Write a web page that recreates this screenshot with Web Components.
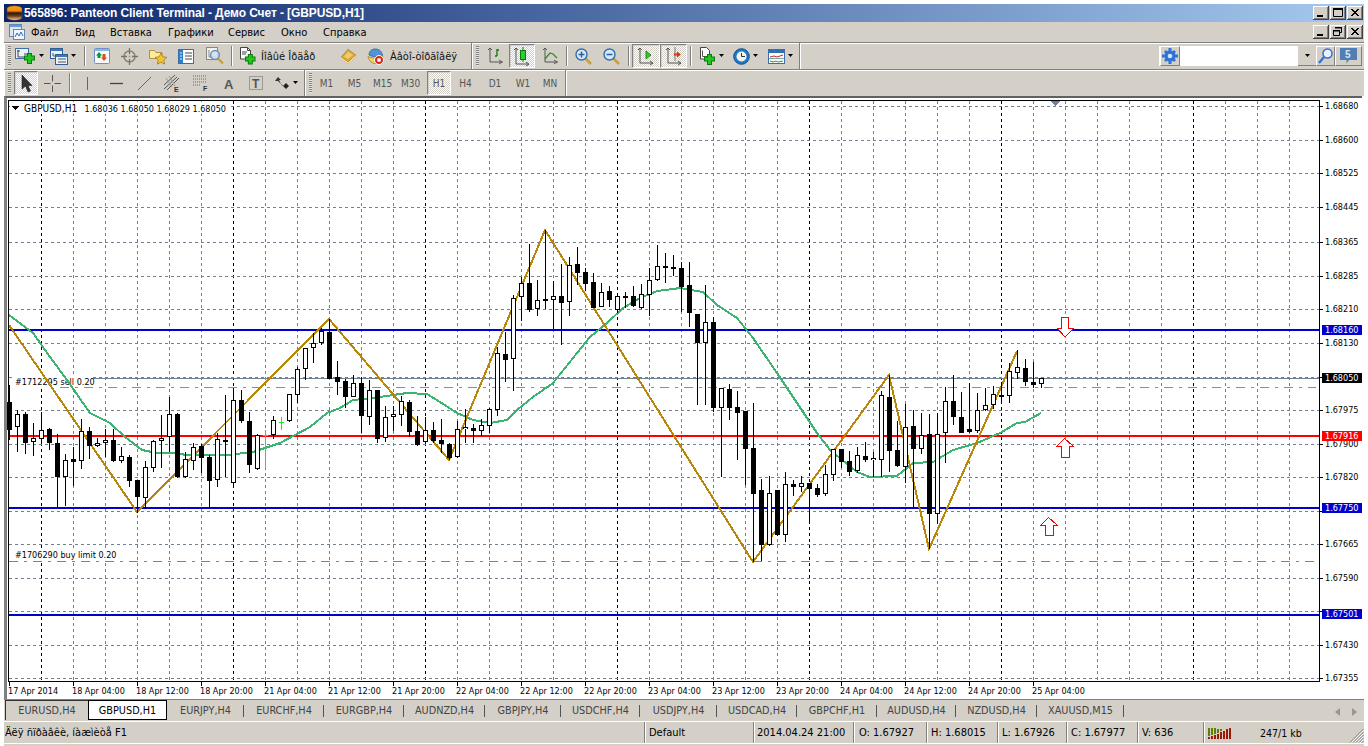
<![CDATA[<!DOCTYPE html>
<html><head><meta charset="utf-8">
<style>
html,body{margin:0;padding:0;background:#fff;width:1368px;height:746px;overflow:hidden}
</style>
<script>
const FONT='"DejaVu Sans Condensed","DejaVu Sans",sans-serif';
const ICONS={
caret:[7,4,'<path d="M1 0h5L3.500 3z" fill="#000"/>'],
newchart:[21,16,'<rect x=".5" y=".5" width="13" height="10" fill="#eaf2fb" stroke="#3f6ea6"/><path d="M3 2v7h9M2 3h3M9 6h3" stroke="#444" fill="none"/><path d="M9 10h11M14.500 5v11" stroke="#0a7a0a" stroke-width="5"/><path d="M10 10h9M14.500 6v9" stroke="#22c522" stroke-width="3"/>'],
profiles:[18,17,'<rect x=".5" y=".5" width="12" height="10" fill="#eaf2fb" stroke="#2f5f96"/><rect x="1" y="1" width="11" height="2" fill="#3f78b8"/><rect x="5.500" y="6.500" width="12" height="10" fill="#eaf2fb" stroke="#2f5f96"/><rect x="6" y="7" width="11" height="2" fill="#3f78b8"/><path d="M8 11h8M8 14h8" stroke="#555"/><path d="M3 5v3h2" stroke="#555" fill="none"/>'],
market:[16,16,'<rect x=".5" y=".5" width="15" height="15" rx="1" fill="#f6f9fe" stroke="#6b93c4"/><rect x="1" y="1" width="14" height="2" fill="#8db5e2"/><path d="M5 4l3 3.500H6.500V10h-3V7.500H2z" fill="#0a9a2a"/><path d="M10 13l-3-3.500h1.500V6h3v3.500H13z" fill="#d8501a"/>'],
navig:[17,17,'<circle cx="8.500" cy="8.500" r="5.500" fill="none" stroke="#8a8578" stroke-width="1.500"/><path d="M8.500 0v6M8.500 11v6M0 8.500h6M11 8.500h6" stroke="#77736a" stroke-width="1.300"/><circle cx="8.500" cy="8.500" r="1" fill="#a29d90"/>'],
favs:[18,18,'<path d="M.5 3.500h5l1.500 2h6v6h-12.500z" fill="#ffe9a0" stroke="#b0923c"/><path d="M12 6l1.800 3.800 4 .5-3 2.800.8 4-3.600-2-3.600 2 .8-4-3-2.800 4-.5z" fill="#f4c430" stroke="#a67c10" stroke-width=".8"/>'],
term:[16,15,'<rect x=".5" y=".5" width="15" height="14" fill="#fff" stroke="#3f6ea6"/><rect x="1" y="1" width="4" height="13" fill="#2f7fd0"/><path d="M7 4h7M7 7h7M7 10h7" stroke="#444"/><path d="M2 4h2M2 7h2M2 10h2" stroke="#cfe"/>'],
tester:[18,18,'<rect x=".5" y=".5" width="11" height="12" fill="#f2f0ea" stroke="#8a8680"/><path d="M3 3v7h7" stroke="#888" fill="none"/><circle cx="9" cy="8" r="4.300" fill="#cfe2f6" fill-opacity=".85" stroke="#5f87b0" stroke-width="1.300"/><path d="M12 11.500l5 5" stroke="#c9a13a" stroke-width="2.400"/>'],
order:[16,18,'<path d="M.5.500h7l3 3V12h-10z" fill="#fff" stroke="#444"/><path d="M7.500.5v3h3M2 5h5M2 7h4" stroke="#444" fill="none"/><path d="M5 12h10.500M10.300 7v10.500" stroke="#0a7a0a" stroke-width="5"/><path d="M6 12h8.600M10.300 8v8.500" stroke="#22c522" stroke-width="3"/>'],
book:[17,16,'<path d="M1 9L8 1l8 6-1 3-7 6-7-5z" fill="#8a6414"/><path d="M1 9l7 5 8-7-1 3-7 6-7-5z" fill="#f3e2a8"/><path d="M1.500 9L8 1.500 15.500 7 8 13.500z" fill="#d9ab3c"/><path d="M4 8.500L8 4l5 3-5 4z" fill="#efcb66"/>'],
expert:[17,17,'<path d="M2 7c0-4 3-6 6-6s6 1 7 5l1 1c-3 2-11 2-14 0z" fill="#4f95d6" stroke="#2d5f96" stroke-width=".8"/><path d="M1 8.500c3 2 11 2 15 0-1 5-3 7-7 7s-7-2-8-7z" fill="#f2d160" stroke="#a6851c" stroke-width=".8"/><circle cx="12" cy="12" r="4.500" fill="#d8251a" stroke="#fff"/><rect x="10.300" y="10.300" width="3.400" height="3.400" fill="#fff"/>'],
bars:[15,16,'<path d="M2 0v14h13M0 2l2-2 2 2M11 12l3 2-3 2" stroke="#555" fill="none"/><path d="M9 1v7M7 8h2M9 2h2" stroke="#0a7a0a" stroke-width="1.300" fill="none"/>'],
candles:[16,19,'<path d="M2 1v16h13M0 3l2-2 2 2M12 15l3 2-3 2" stroke="#555" fill="none"/><path d="M9 0v15" stroke="#0a7a0a"/><rect x="6.500" y="3.500" width="5" height="9" fill="#2ecc2e" stroke="#0a7a0a"/>'],
line:[15,16,'<path d="M2 0v14h13M0 2l2-2 2 2M11 12l3 2-3 2" stroke="#555" fill="none"/><path d="M2 11l5-6 3 1 4 4" stroke="#2a8a2a" stroke-width="1.200" fill="none"/>'],
zoomin:[17,17,'<path d="M10.500 10.500l5.500 5.500" stroke="#c9a13a" stroke-width="2.600"/><circle cx="6.500" cy="6.500" r="5.500" fill="#d6e8f8" stroke="#2f6fb0" stroke-width="1.400"/><path d="M3.500 6.500h6M6.500 3.500v6" stroke="#2f5f96" stroke-width="1.500"/>'],
zoomout:[17,17,'<path d="M10.500 10.500l5.500 5.500" stroke="#c9a13a" stroke-width="2.600"/><circle cx="6.500" cy="6.500" r="5.500" fill="#d6e8f8" stroke="#2f6fb0" stroke-width="1.400"/><path d="M3.500 6.500h6" stroke="#2f5f96" stroke-width="1.500"/>'],
autoscroll:[16,18,'<path d="M2 1v15h13M0 3l2-2 2 2M12 14l3 2-3 2" stroke="#555" fill="none"/><path d="M8 4l5 4-5 4z" fill="#2ecc2e" stroke="#0a7a0a" stroke-width=".8"/>'],
shift:[16,18,'<path d="M2 1v15h13M0 3l2-2 2 2M12 14l3 2-3 2" stroke="#555" fill="none"/><path d="M9 0v14" stroke="#777"/><path d="M15 7.500l-4-3v2H8v2h3v2z" fill="#e0300f"/>'],
indic:[17,18,'<path d="M1.500.500h6l3 3V12h-9z" fill="#fff" stroke="#444"/><path d="M3.500 3.500v6h5" stroke="#555" fill="none"/><path d="M5 12h11M10.500 7v11" stroke="#0a7a0a" stroke-width="5"/><path d="M6 12h9M10.500 8v9" stroke="#22c522" stroke-width="3"/>'],
clock:[17,17,'<circle cx="8.500" cy="8.500" r="7.800" fill="#1f78c8" stroke="#124e8a"/><circle cx="8.500" cy="8.500" r="5" fill="#f4f4ef"/><path d="M8.500 5v3.500H12" stroke="#333" fill="none"/>'],
tpl:[17,15,'<rect x=".5" y=".5" width="16" height="14" fill="#fff" stroke="#3f6ea6"/><rect x="1" y="1" width="15" height="3" fill="#2f6fb8"/><path d="M2 8l4-1 3 1 6-2" stroke="#c03018" fill="none"/><path d="M1 9.500h15" stroke="#7aa"/><path d="M2 12l3 1 3-1 2 1 5-1" stroke="#2a9a2a" fill="none"/>'],
cursor:[11,17,'<path d="M1 0v14l3.500-3 2.500 6 2.500-1-2.500-5.500H11z" fill="#333" stroke="#222" stroke-width=".6"/>'],
cross:[17,17,'<path d="M8.500 0v6.500M8.500 10.500V17M0 8.500h6.500M10.500 8.500H17" stroke="#555"/>'],
vline:[3,13,'<path d="M1.500 0v13" stroke="#666"/>'],
hline:[13,3,'<path d="M0 1.500h13" stroke="#444" stroke-width="1.300"/>'],
trend:[13,13,'<path d="M0 13L13 0" stroke="#666"/>'],
chan:[18,17,'<path d="M1 10L12 0M1 14L14 2M4 15L16 3" stroke="#555" fill="none"/><path d="M3 3l6 9M6 1l6 10" stroke="#999"/><text x="11" y="16.500" font-size="7" font-family="Liberation Sans" font-weight="700" fill="#333">E</text>'],
fibo:[15,16,'<path d="M0 1h14M0 4h14M0 7h14M0 10h8" stroke="#666" stroke-dasharray="1 1"/><text x="10" y="15.500" font-size="7" font-family="Liberation Sans" font-weight="700" fill="#333">F</text>'],
atext:[9,11,'<text x="0" y="10.500" font-size="13" font-family="Liberation Sans" font-weight="700" fill="#555">A</text>'],
tlabel:[14,14,'<path d="M.5.500h13v13H.5z" fill="none" stroke="#666" stroke-dasharray="1 1"/><text x="3" y="11.500" font-size="12" font-family="Liberation Sans" font-weight="700" fill="#555">T</text>'],
arrows:[15,13,'<path d="M3 0l3 3H4l2 4-3-3H0z" fill="#333"/><path d="M11 6l3 3-3 3-3-3z" fill="#222"/><path d="M6 7l3 3" stroke="#777"/>'],
conn:[24,16,(()=>{let s='';for(let i=0;i<8;i++){const r=[2,3,4,5,7,8,10,11][i];s+=`<rect x="${i*3}" y="${3+i*.4|0}" width="2" height="${13-r-(3+i*.4|0)}" fill="#5f7f00"/><rect x="${i*3}" y="${13-r+1}" width="2" height="${r}" fill="#a01808"/>`}return s})()],
gripper:[15,15,'<path d="M14.500 1L1 14.500M14.500 4L4 14.500M14.500 7L7 14.500M14.500 10L10 14.500M14.500 13L13 14.500" stroke="#808080"/><path d="M14.500 2.500L2.500 14.500M14.500 5.500L5.500 14.500M14.500 8.500L8.500 14.500M14.500 11.500L11.500 14.500" stroke="#fff"/>'],
logo:[17,16,'<defs><linearGradient id="lg" x1="0" y1="0" x2="0" y2="1"><stop offset="0" stop-color="#f6a21e"/><stop offset=".35" stop-color="#f08a10"/><stop offset=".5" stop-color="#2a1a10"/><stop offset=".7" stop-color="#6a3a18"/><stop offset="1" stop-color="#f7d39a"/></linearGradient></defs><path d="M1 3c3-3 12-3 15 0v10c-3 3-12 3-15 0z" fill="url(#lg)" stroke="#5a3a1a" stroke-width=".5"/>'],
mdi:[16,16,'<rect x=".5" y=".5" width="12" height="12" fill="#dbe8f8" stroke="#5a8ac0"/><rect x="1" y="1" width="11" height="2" fill="#6a9ad0"/><rect x="4.500" y="5.500" width="11" height="10" fill="#f0f6fc" stroke="#5a8ac0"/><path d="M6 13l2-4 2 3 2-4 2 4" stroke="#2f6fb8" fill="none"/>'],
gear:[16,16,'<g fill="#2f72d8"><circle cx="8" cy="8" r="5.500"/><path d="M6.500 0h3v3h-3zM6.500 13h3v3h-3zM0 6.500h3v3H0zM13 6.500h3v3h-3zM2 4l2-2 2 2-2 2zM10 4l2-2 2 2-2 2zM2 12l2-2 2 2-2 2zM10 12l2-2 2 2-2 2z"/></g><circle cx="8" cy="8" r="2.300" fill="#cfe2ff"/>'],
search:[15,16,'<circle cx="9.500" cy="5.500" r="4.500" fill="#eaf3ff" stroke="#2f6fd0" stroke-width="1.500"/><path d="M6 9l-5 6" stroke="#2f6fd0" stroke-width="2.200"/>'],
msg:[17,16,'<path d="M0 0h17v12H9l-2.500 3.500V12H0z" fill="#4f7fb4"/><text x="5" y="10" font-size="10" font-family="Liberation Sans" font-weight="700" fill="#d8e4f2">5</text>'],
};
function def(name,css,html,init){
  customElements.define(name,class extends HTMLElement{
    connectedCallback(){
      if(this.shadowRoot)return;
      const r=this.attachShadow({mode:'open'});
      r.innerHTML=`<style>${css}</style>`+(typeof html==='function'?html(this):html);
      if(init)init(this,r);
    }
  });
}
def('mt-icon',':host{display:inline-flex;flex:none}svg{display:block;overflow:visible}',e=>{
  const [w,h,s]=ICONS[e.getAttribute('name')];
  return `<svg width="${w}" height="${h}" viewBox="0 0 ${w} ${h}">${s}</svg>`;
});
def('mt-app',`:host{display:flex;flex-direction:column;box-sizing:border-box;width:1368px;height:746px;padding:4px 4px 0;font:11px ${FONT};color:#000}`,'<slot></slot>');
const winBtns=(g)=>`<svg width="16" height="14" viewBox="0 0 16 14"><rect width="16" height="14" fill="#404040"/><rect width="15" height="13" fill="#fff"/><rect x="1" y="1" width="14" height="12" fill="#808080"/><rect x="1" y="1" width="13" height="11" fill="#d4d0c8"/>${g}</svg>`;
const gMin='<rect x="4" y="9" width="6" height="2" fill="#000"/>';
const gMax='<path d="M3.500 2.500h9v8h-9z" fill="none" stroke="#000"/><rect x="3" y="2" width="10" height="2" fill="#000"/>';
const gRes='<path d="M5.500 2.500h6v5h-2M3.500 5.500h6v5h-6z" fill="none" stroke="#000"/><rect x="5" y="2" width="7" height="1.500" fill="#000"/><rect x="3" y="5" width="7" height="1.500" fill="#000"/>';
const gX='<path d="M4 3l7 7M5 3l7 7M11 3l-7 7M12 3l-7 7" stroke="#000"/>';
def('mt-titlebar',`:host{display:flex;flex:none;align-items:center;height:18px;padding-left:2px;color:#fff;background:linear-gradient(90deg,#0a246a,#a6caf0);font:bold 12px "Liberation Sans",sans-serif;white-space:nowrap}
.t{margin-left:1px;flex:1;letter-spacing:-.1px}.bs{display:flex;gap:1px;margin-right:1px}svg{display:block}`,
`<mt-icon name="logo"></mt-icon><span class="t"><slot></slot></span><span class="bs">${winBtns(gMin)}${winBtns(gMax)}${winBtns(gX)}</span>`);
def('mt-menubar',`:host{display:flex;flex:none;align-items:center;height:20px;background:#d4d0c8;padding-left:5px}
.m{display:flex;flex:1;margin-left:6px}.bs{display:flex;gap:1px;margin-right:1px}svg{display:block}`,
`<mt-icon name="mdi"></mt-icon><div class="m"><slot></slot></div><span class="bs">${winBtns(gMin)}${winBtns(gRes)}${winBtns(gX)}</span>`);
def('mt-menu-item',`:host{flex:none;display:block;font-size:11px;white-space:nowrap}`,'<slot></slot>');
def('mt-toolrow',`:host{display:flex;flex:none;height:27px;box-sizing:border-box;background:#d4d0c8;border-top:1px solid #808080;box-shadow:inset 0 1px 0 #fff}`,'<slot></slot>');
def('mt-group',`:host{display:flex;flex:none;align-items:center;box-sizing:border-box;height:100%;border-right:1px solid #808080;box-shadow:1px 0 0 #fff,inset 1px 1px 0 #fff}`,'<slot></slot>');
def('mt-grip',`:host{flex:none;display:block;width:3px;height:20px;margin:0 3px 0 4px;background:repeating-linear-gradient(180deg,#808080 0 1px,#e8e6e0 1px 2px)}`,'');
def('mt-btn',`:host{flex:none;display:flex;align-items:center;justify-content:center;box-sizing:border-box;height:24px;gap:2px;white-space:nowrap}
:host([active]){background:repeating-conic-gradient(#fff 0 25%,#d4d0c8 0 50%) 0 0/2px 2px;border:1px solid;border-color:#808080 #fff #fff #808080;box-shadow:inset 1px 1px 0 #d4d0c8}`,'<slot></slot>',
 e=>{e.style.width=e.getAttribute('w')+'px';const l=e.getAttribute('lead');if(l!==null){e.style.justifyContent='flex-start';e.style.paddingLeft=l+'px';e.style.gap=e.getAttribute('g')+'px'}});
def('mt-sep',`:host{flex:none;display:flex;justify-content:center;height:20px}i{display:block;width:1px;height:100%;background:#808080;box-shadow:1px 0 0 #fff}`,'<i></i>',e=>{e.style.width=e.getAttribute('w')+'px'});
def('mt-label',`:host{display:block;font-size:11px;color:#111}:host([tf]){color:#555;font-size:10px}`,'<slot></slot>');
def('mt-searchbar',`:host{display:flex;flex:none;align-items:center;height:20px;margin:3px 2px 0 auto;background:#fff;width:203px;box-sizing:border-box;padding-left:1px}
.cell{display:flex;align-items:center;justify-content:center;height:20px;background:#d4d0c8;border:1px solid;border-color:#fff #808080 #808080 #fff;box-sizing:border-box}
.in{flex:1;height:20px;background:#fff}
.dd{background:#d4d0c8;width:18px;height:20px;display:flex;align-items:center;justify-content:center;border-bottom:1px solid #808080;box-sizing:border-box}`,
`<div class="cell" style="width:20px"><mt-icon name="gear"></mt-icon></div><div class="in"></div><div class="dd"><mt-icon name="caret"></mt-icon></div><div class="cell" style="width:19px"><mt-icon name="search"></mt-icon></div><div class="cell" style="width:27px"><mt-icon name="msg"></mt-icon></div>`);
def('mt-tabs',`:host{display:flex;flex:none;height:22px;box-sizing:border-box;background:#d4d0c8;border-top:1px solid #808080;padding-left:1px;position:relative;align-items:flex-start}
.a{position:absolute;right:7px;top:8px;display:flex;gap:12px}`,
`<slot></slot><div class="a"><svg width="5" height="8"><path d="M5 0v8L0 4z" fill="#9a968e"/></svg><svg width="5" height="8"><path d="M0 0v8l5-4z" fill="#9a968e"/></svg></div>`);
def('mt-tab',`:host{flex:none;display:flex;align-items:center;justify-content:center;box-sizing:border-box;height:19px;margin-top:1px;font-size:10.800px;color:#444;white-space:nowrap;position:relative}
:host(:not([active]):not([first]))::after{content:"";position:absolute;right:0;top:4px;height:12px;width:1px;background:#555}
:host([active]){background:#fff;color:#000;border:1px solid #000;border-top:1px solid #000;height:20px;margin-top:0}
:host([first]){border-top:1px solid #333;border-left:1px solid #333;margin-top:0;height:20px}`,'<slot></slot>');
def('mt-status',`:host{display:flex;flex:none;height:23px;box-sizing:border-box;background:#d4d0c8;border-top:1px solid #fff;border-bottom:1px solid #fff;padding-left:1px;font-size:11px;box-shadow:0 3px 0 #d4d0c8}`,'<slot></slot>');
def('mt-cell',`:host{flex:none;display:flex;align-items:center;box-sizing:border-box;padding-left:4px;white-space:nowrap;height:100%}
:host(:not([first])){border-left:1px solid #808080;box-shadow:inset 1px 0 0 #fff}
:host([first]){padding-left:0}`,'<slot></slot>');
const conv=(ox,oy,k0,rows)=>rows.map((r,i)=>({k:k0+i,wt:oy+r[0]/3,wb:oy+r[1]/3,bt:oy+r[2]/3,bb:oy+r[3]/3,w:r[4]}));
const C=[].concat(
conv(0,300,-1,[[255,420,305,390,0],[330,455,343,380,1],[335,462,343,428,0],[370,468,415,425,1],[335,432,391,418,1],[383,450,388,428,0],[403,625,430,532,0],[462,618,481,530,1],[442,558,477,485,0],[358,508,394,484,1],[380,476,393,437,0],[415,442,430,437,1],[388,470,421,430,1],[388,485,420,483,0],[442,490,469,482,1],[465,560,471,542,0],[540,638,540,590,0],[484,628,502,595,1],[420,515,424,505,1],[345,505,415,424,1],[290,455,343,412,1],[340,535,343,532,0],[455,535,478,532,1],[428,510,442,482,1],[432,520,438,475,0],[465,622,471,542,0],[400,560,418,541,1],[285,530,421,425,0],[265,562,300,550,1],[270,368,300,362,0],[335,518,363,494,0],[403,510,406,508,1]]),
conv(0,300,32,[[348,416,361,404,1]]),
conv(0,300,34,[[283,365,283,362,1],[200,310,208,284,1],[145,240,145,208,1],[100,190,130,145,1],[85,135,93,130,1],[57,236,97,236,0],[183,285,232,245,0]]),
conv(340,220,41,[[478,563,484,530,0],[465,530,490,530,1],[472,640,490,587,0],[480,615,511,590,1],[511,668,511,656,0],[558,665,592,655,1],[558,632,583,590,1],[528,618,544,584,1],[540,652,546,635,0],[588,678,634,674,0],[590,668,631,665,1],[606,668,631,664,0],[597,700,660,671,0],[670,720,672,715,0],[603,715,628,712,1],[568,668,622,628,1],[612,670,625,632,0],[598,648,616,632,1],[565,640,568,617,1],[380,587,400,569,1],[335,487,402,420,0],[225,512,235,418,1],[170,303,190,232,1],[72,275,190,269,0],[180,288,241,268,1],[30,268,238,242,0],[182,327,229,241,1],[132,375,229,248,0],[110,288,136,245,1],[82,195,132,158,0],[145,212,156,191,0],[160,265,186,263,0],[190,262,217,262,1],[198,262,214,241,0],[229,280,229,269,1],[216,265,229,231,0],[198,260,229,257,0],[192,268,223,263,1],[145,288,181,226,1],[75,182,139,181,1],[100,188,139,143,0],[105,168,142,146,0]]),
conv(680,260,83,[[5,155,25,80,0],[5,200,75,160,0],[163,435,163,248,0],[75,435,187,250,1],[170,455,187,443,0],[385,650,385,443,1],[373,480,388,443,0],[393,600,441,458,0],[453,676,453,566,0],[430,905,565,701,0],[658,903,690,855,0],[648,858,700,856,1],[690,828,690,825,0],[636,845,673,824,1],[660,708,672,680,0],[648,695,670,680,1],[669,788,669,686,0],[672,712,685,704,0],[615,708,643,701,1],[566,662,568,646,1],[566,625,568,605,0],[573,648,603,635,0],[560,638,586,632,1],[546,606,588,600,0],[575,650,595,601,1],[392,650,406,599,1],[345,635,411,572,0],[483,622,570,617,0],[432,668,502,620,1],[450,742,499,566,0],[458,582,526,566,1],[462,868,522,761,0],[458,792,523,761,1],[380,608,424,520,1],[345,495,424,470,0],[395,518,472,518,0],[368,518,507,515,0],[400,518,451,514,1],[384,452,436,449,1],[378,448,403,434,1],[365,430,405,410,0],[310,430,334,409,1],[270,356,322,338,1]]),
conv(1000,300,126,[[177,258,205,247,0],[187,265,247,256,0],[235,263,235,253,1]])
);
const MA=[[9,315],[33,333],[50,357],[67,380],[90,413],[110,423],[125,437],[142,450],[157,453],[173,453],[187,455],[227,455],[253,452],[280,443],[310,427],[327,413],[340,408],[353,400],[373,398],[393,395],[407,393],[427,394],[440,402],[457,413],[473,420],[490,423],[507,420],[517,410],[533,397],[553,383],[573,358],[590,337],[607,323],[623,308],[640,298],[657,291],[673,289],[680,288],[703,292],[717,305],[737,318],[753,338],[777,373],[793,397],[817,433],[830,450],[857,472],[870,477],[897,476],[913,463],[933,462],[953,450],[977,443],[1000,433],[1017,423],[1025,422],[1041,413]];
const ZZ=[[9,325],[137,512],[329,319],[449,460],[545,230],[753,562],[889,375],[929,549],[1017,351]];
const GY=[106,140,173,207,242,276,309,343,377,410,444,477,511,544,578,611,645,678];
const PR=['1.68680','1.68600','1.68525','1.68445','1.68365','1.68285','1.68210','1.68130','','1.67975','1.67900','1.67820','','1.67665','1.67590','','1.67430','1.67355'];
const TL=['17 Apr 2014','18 Apr 04:00','18 Apr 12:00','18 Apr 20:00','21 Apr 04:00','21 Apr 12:00','21 Apr 20:00','22 Apr 04:00','22 Apr 12:00','22 Apr 20:00','23 Apr 04:00','23 Apr 12:00','23 Apr 20:00','24 Apr 04:00','24 Apr 12:00','24 Apr 20:00','25 Apr 04:00'];
function chartSVG(){
  const R=Math.round;let s='';
  const ln=(x1,y1,x2,y2,c,w,d)=>`<line x1="${x1}" y1="${y1}" x2="${x2}" y2="${y2}" stroke="${c}" stroke-width="${w||1}"${d?` stroke-dasharray="${d}"`:''}/>`;
  for(let x=41;x<1319;x+=32){const blk=(x-41)%192===0;s+=ln(x+.5,101,x+.5,681,blk?'#000':'#708090',1,'3 3');}
  for(const y of GY)s+=ln(9,y+.5,1319,y+.5,'#708090',1,'3 3');
  s+=`<rect x="10" y="102" width="220" height="12" fill="#fff"/><rect x="15" y="375" width="78" height="11" fill="#fff"/><rect x="15" y="549" width="102" height="11" fill="#fff"/>`;
  s+=ln(93,378.5,1319,378.5,'#708090');
  s+=ln(60,387.5,1316,387.5,'#32cd32',1,'9 6 3 6');
  s+=ln(9,561.5,1316,561.5,'#00e000',1,'9 6 3 6');
  s+=ln(9,330,1319,330,'#0000cd',2)+ln(9,508,1319,508,'#0000cd',2)+ln(9,615,1319,615,'#0000cd',2)+ln(9,436,1319,436,'#ff0000',2);
  const ap='fill="#fff" stroke="#ff0000" stroke-width="1"';
  s+=`<polygon points="1061.500,317.500 1068.500,317.500 1068.500,328.500 1073.500,328.500 1065,337 1057.500,328.500 1061.500,328.500" ${ap}/>`;
  s+=`<polygon points="1064.500,438.500 1073.500,446.500 1069.500,446.500 1069.500,457.500 1061.500,457.500 1061.500,446.500 1056.500,446.500" ${ap}/>`;
  s+=`<polygon points="1048.500,517.500 1057.500,525.500 1053.500,525.500 1053.500,535.500 1045.500,535.500 1045.500,525.500 1040.500,525.500" ${ap}/>`;
  s+=`<polygon points="1050,100 1061,100 1055.500,106" fill="#708090"/>`;
  const tx=(x,y,t,c,ex)=>t?`<text x="${x}" y="${y}"${c?` fill="${c}"`:''}${ex||''}>${t}</text>`:'';
  s+=tx(15,385,'#1712295 sell 0.20')+tx(15,558,'#1706290 buy limit 0.20');
  const pts=a=>a.map(p=>p.join(',')).join(' ');
  s+=`<polyline points="${pts(MA)}" fill="none" stroke="#3cb371" stroke-width="2"/>`;
  s+=`<polyline points="${pts(ZZ)}" fill="none" stroke="#b8860b" stroke-width="2"/>`;
  for(const c of C){
    const X=17+8*c.k,wt=R(c.wt),wb=R(c.wb),bt=R(c.bt),bb=Math.max(R(c.bb),bt+2);
    s+=`<rect x="${X}" y="${wt}" width="1" height="${wb-wt}" fill="#000"/><rect x="${X-2}" y="${bt}" width="5" height="${bb-bt}" fill="#000"/>`;
    if(c.w&&bb-bt>2)s+=`<rect x="${X-1}" y="${bt+1}" width="3" height="${bb-bt-2}" fill="#fff"/>`;
    if(c.w&&bb-bt<=2)s+=`<rect x="${X-1}" y="${bt+1}" width="3" height="1" fill="#fff"/>`;
  }
  s+=`<rect x="265" y="430" width="1" height="38" fill="#00ff00"/><rect x="263" y="435" width="5" height="1" fill="#00ff00"/><rect x="281" y="417" width="1" height="13" fill="#00ff00"/><rect x="279" y="422" width="5" height="1" fill="#00ff00"/>`;
  s+=`<rect x="8" y="100" width="1" height="582" fill="#000"/><rect x="1319" y="100" width="1" height="582" fill="#000"/><rect x="8" y="100" width="1312" height="1" fill="#000"/><rect x="8" y="681" width="1312" height="1" fill="#000"/>`;
  GY.forEach((y,i)=>{s+=ln(1320,y+.5,1323,y+.5,'#000')+tx(1325,y+2.500,PR[i])});
  TL.forEach((t,i)=>{const x=9+64*i;s+=ln(x+.5,682,x+.5,686,'#000')+tx(i?x-1:8,694,t)});
  s+=`<polygon points="11,106 19,106 15,110" fill="#000"/>`;
  s+=tx(24,112,'GBPUSD,H1','',' font-size="10"')+tx(84.500,112,'1.68036')+tx(120.500,112,'1.68050')+tx(156.500,112,'1.68029')+tx(192.500,112,'1.68050');
  const tag=(y,c,t)=>`<rect x="1322" y="${y-5}" width="40" height="10" fill="${c}"/>`+tx(1325,y+2.500,t,'#fff');
  s+=tag(330,'#0000cd','1.68160')+tag(378,'#000','1.68050')+tag(436,'#ff0000','1.67916')+tag(508,'#0000cd','1.67750')+tag(614,'#0000cd','1.67501');
  return s;
}
def('mt-chart',`:host{display:block;flex:none;width:1358px;height:603px;box-sizing:border-box;background:#fff;border-top:2px solid #606060;border-left:3px solid #808080}
svg{display:block;font:9px ${FONT};shape-rendering:crispEdges}`,
()=>`<svg width="1355" height="601" viewBox="7 98 1355 601">${chartSVG()}</svg>`);
</script>
</head><body><mt-app><mt-titlebar>565896: Panteon Client Terminal - Демо Счет - [GBPUSD,H1]</mt-titlebar>
  <mt-menubar>
    <mt-menu-item style="width:44px">Файл</mt-menu-item>
    <mt-menu-item style="width:35px">Вид</mt-menu-item>
    <mt-menu-item style="width:58px">Вставка</mt-menu-item>
    <mt-menu-item style="width:60px">Графики</mt-menu-item>
    <mt-menu-item style="width:53px">Сервис</mt-menu-item>
    <mt-menu-item style="width:42px">Окно</mt-menu-item>
    <mt-menu-item style="width:50px">Справка</mt-menu-item>
  </mt-menubar>
  <mt-toolrow>
    <mt-group style="width:468px">
      <mt-grip></mt-grip>
      <mt-btn w="32"><mt-icon name="newchart"></mt-icon><mt-icon name="caret"></mt-icon></mt-btn>
      <mt-btn w="34"><mt-icon name="profiles"></mt-icon><mt-icon name="caret"></mt-icon></mt-btn>
      <mt-sep w="8"></mt-sep>
      <mt-btn w="27"><mt-icon name="market"></mt-icon></mt-btn>
      <mt-btn w="29"><mt-icon name="navig"></mt-icon></mt-btn>
      <mt-btn w="27"><mt-icon name="favs"></mt-icon></mt-btn>
      <mt-btn w="29"><mt-icon name="term"></mt-icon></mt-btn>
      <mt-btn w="29"><mt-icon name="tester"></mt-icon></mt-btn>
      <mt-sep w="5"></mt-sep>
      <mt-btn w="95" lead="6" g="5"><mt-icon name="order"></mt-icon><mt-label>Íîâûé Îðäåð</mt-label></mt-btn>
      <mt-btn w="38"><mt-icon name="book"></mt-icon></mt-btn>
      <mt-btn w="104" lead="0" g="6"><mt-icon name="expert"></mt-icon><mt-label>Àâòî-òîðãîâëÿ</mt-label></mt-btn>
    </mt-group>
    <mt-group style="width:328px">
      <mt-grip></mt-grip>
      <mt-btn w="27"><mt-icon name="bars"></mt-icon></mt-btn>
      <mt-btn w="26" active><mt-icon name="candles"></mt-icon></mt-btn>
      <mt-btn w="30"><mt-icon name="line"></mt-icon></mt-btn>
      <mt-sep w="3"></mt-sep>
      <mt-btn w="30"><mt-icon name="zoomin"></mt-icon></mt-btn>
      <mt-btn w="26"><mt-icon name="zoomout"></mt-icon></mt-btn>
      <mt-sep w="8"></mt-sep>
      <mt-btn w="28" active><mt-icon name="autoscroll"></mt-icon></mt-btn>
      <mt-btn w="27" active><mt-icon name="shift"></mt-icon></mt-btn>
      <mt-sep w="7"></mt-sep>
      <mt-btn w="35"><mt-icon name="indic"></mt-icon><mt-icon name="caret"></mt-icon></mt-btn>
      <mt-btn w="34"><mt-icon name="clock"></mt-icon><mt-icon name="caret"></mt-icon></mt-btn>
      <mt-btn w="36"><mt-icon name="tpl"></mt-icon><mt-icon name="caret"></mt-icon></mt-btn>
    </mt-group>
    <mt-searchbar></mt-searchbar>
  </mt-toolrow>
  <mt-toolrow>
    <mt-group style="width:301px">
      <mt-grip></mt-grip>
      <mt-btn w="24" active><mt-icon name="cursor"></mt-icon></mt-btn>
      <mt-btn w="28"><mt-icon name="cross"></mt-icon></mt-btn>
      <mt-sep w="7"></mt-sep>
      <mt-btn w="28"><mt-icon name="vline"></mt-icon></mt-btn>
      <mt-btn w="30"><mt-icon name="hline"></mt-icon></mt-btn>
      <mt-btn w="26"><mt-icon name="trend"></mt-icon></mt-btn>
      <mt-btn w="30"><mt-icon name="chan"></mt-icon></mt-btn>
      <mt-btn w="26"><mt-icon name="fibo"></mt-icon></mt-btn>
      <mt-btn w="30"><mt-icon name="atext"></mt-icon></mt-btn>
      <mt-btn w="26"><mt-icon name="tlabel"></mt-icon></mt-btn>
      <mt-btn w="36"><mt-icon name="arrows"></mt-icon><mt-icon name="caret"></mt-icon></mt-btn>
    </mt-group>
    <mt-group style="width:261px">
      <mt-grip></mt-grip>
      <mt-btn w="23"><mt-label tf>M1</mt-label></mt-btn>
      <mt-btn w="33"><mt-label tf>M5</mt-label></mt-btn>
      <mt-btn w="23"><mt-label tf>M15</mt-label></mt-btn>
      <mt-btn w="33"><mt-label tf>M30</mt-label></mt-btn>
      <mt-btn w="24" active><mt-label tf>H1</mt-label></mt-btn>
      <mt-btn w="29"><mt-label tf>H4</mt-label></mt-btn>
      <mt-btn w="30"><mt-label tf>D1</mt-label></mt-btn>
      <mt-btn w="26"><mt-label tf>W1</mt-label></mt-btn>
      <mt-btn w="28"><mt-label tf>MN</mt-label></mt-btn>
    </mt-group>
  </mt-toolrow>
  <mt-chart></mt-chart>
  <mt-tabs>
    <mt-tab first style="width:83px">EURUSD,H4</mt-tab>
    <mt-tab active style="width:79px">GBPUSD,H1</mt-tab>
    <mt-tab style="width:77px">EURJPY,H4</mt-tab>
    <mt-tab style="width:80px">EURCHF,H4</mt-tab>
    <mt-tab style="width:80px">EURGBP,H4</mt-tab>
    <mt-tab style="width:81px">AUDNZD,H4</mt-tab>
    <mt-tab style="width:76px">GBPJPY,H4</mt-tab>
    <mt-tab style="width:79px">USDCHF,H4</mt-tab>
    <mt-tab style="width:77px">USDJPY,H4</mt-tab>
    <mt-tab style="width:80px">USDCAD,H4</mt-tab>
    <mt-tab style="width:80px">GBPCHF,H1</mt-tab>
    <mt-tab style="width:79px">AUDUSD,H4</mt-tab>
    <mt-tab style="width:81px">NZDUSD,H4</mt-tab>
    <mt-tab style="width:87px">XAUUSD,M15</mt-tab>
  </mt-tabs>
  <mt-status>
    <mt-cell style="width:639px" first>Äëÿ ñïðàâêè, íàæìèòå F1</mt-cell>
    <mt-cell style="width:109px">Default</mt-cell>
    <mt-cell style="width:100px;padding-left:3px">2014.04.24 21:00</mt-cell>
    <mt-cell style="width:73px;padding-left:5px">O: 1.67927</mt-cell>
    <mt-cell style="width:71px">H: 1.68015</mt-cell>
    <mt-cell style="width:69px">L: 1.67926</mt-cell>
    <mt-cell style="width:71px">C: 1.67977</mt-cell>
    <mt-cell style="width:66px">V: 636</mt-cell>
    <mt-cell style="width:146px"><mt-icon name="conn"></mt-icon><span style="margin-left:28px;font-size:10.500px">247/1 kb</span></mt-cell>
    <mt-icon name="gripper" style="margin-left:auto;align-self:flex-end"></mt-icon>
  </mt-status></mt-app></body></html>]]>
